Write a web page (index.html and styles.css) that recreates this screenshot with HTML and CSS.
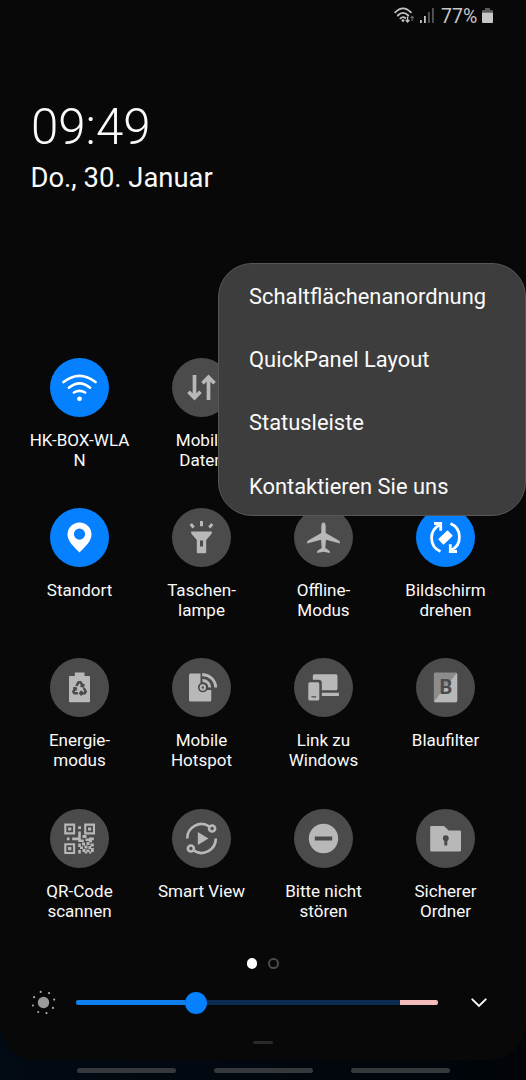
FILE: index.html
```html
<!DOCTYPE html>
<html lang="de">
<head>
<meta charset="utf-8">
<title>Quick Panel</title>
<link rel="stylesheet" href="styles.css">
</head>
<body>
<div class="screen">
  <main class="panel">
    <header class="status">
      <svg class="status-wifi" viewBox="0 0 21 17" width="21" height="17">
        <g fill="none" stroke="#c4c4c4" stroke-width="1.8" stroke-linecap="round">
          <path d="M1.200 5.400Q9-2.600 16.900 5.400"/><path d="M3.800 8.500Q9 3.200 14.300 8.500"/><path d="M6.400 11.400Q9 8.900 11.400 11.200"/>
        </g>
        <circle cx="9" cy="13.600" r="1.400" fill="#c4c4c4"/>
        <path d="M13.600 9.500v5.200M11.800 13l1.800 2 1.800-2" fill="none" stroke="#c4c4c4" stroke-width="1.300"/>
        <path d="M18.200 14v-4.500M16.600 11l1.600-1.700 1.600 1.700" fill="none" stroke="#666" stroke-width="1.200"/>
      </svg>
      <svg class="status-signal" viewBox="0 0 14 15" width="14" height="15">
        <path d="M0 12h1.800v3H0z" fill="#c4c4c4"/><path d="M4 8h1.800v7H4z" fill="#c4c4c4"/>
        <path d="M8 4h1.800v11H8zM12 0h1.800v15H12z" fill="#555"/>
      </svg>
      <span class="status-percent">77%</span>
      <svg class="status-battery" viewBox="0 0 11 15" width="11" height="15">
        <path d="M3 0h5v2h2a1 1 0 0 1 1 1v1.500H0V3a1 1 0 0 1 1-1h2z" fill="#5a5a5a"/>
        <path d="M0 4.500h11V14a1 1 0 0 1-1 1H1a1 1 0 0 1-1-1z" fill="#c6c6c6"/>
      </svg>
    </header>

    <div class="clock">09:49</div>
    <div class="date">Do., 30. Januar</div>

    <section class="tiles">
      <div class="tile on">
        <svg class="tile-icon" viewBox="-29.500 -29.500 59 59">
          <g class="line round" stroke-width="2.600"><path d="M-16-5.400Q0-18 16-5.400"/><path d="M-10.600 .2Q0-8.600 10.600 .2"/><path d="M-5.600 5Q0 1.700 5.600 5"/></g>
          <circle cx="0" cy="11.300" r="2.400"/>
        </svg>
        <span class="label">HK-BOX-WLA<br>N</span>
      </div>
      <div class="tile">
        <svg class="tile-icon" viewBox="-29.500 -29.500 59 59">
          <g class="line" stroke-width="3.700"><path d="M-7-12.500V10.500M-13 4.300L-7 10.400-1 4.300"/><path d="M7 12.500V-10.500M1-4.300L7-10.400 13-4.300"/></g>
        </svg>
        <span class="label">Mobile<br>Daten</span>
      </div>
      <div class="tile"></div>
      <div class="tile"></div>

      <div class="tile on">
        <svg class="tile-icon" viewBox="-29.500 -29.500 59 59">
          <path fill-rule="evenodd" d="M0-15A12 12 0 0 1 12-3C12 4 5 9.800 0 15-5 9.800-12 4-12-3A12 12 0 0 1 0-15ZM0-9A5.600 5.600 0 1 0 0 2.200 5.600 5.600 0 1 0 0-9Z"/>
        </svg>
        <span class="label">Standort</span>
      </div>
      <div class="tile">
        <svg class="tile-icon" viewBox="-29.500 -29.500 59 59">
          <path fill-rule="evenodd" d="M-10.300-6H10.300V-4L4.700 2.500V14.500Q4.700 15.800 3.400 15.800H-3.400Q-4.700 15.800-4.700 14.500V2.500L-10.300-4ZM-1.500 3V9H1.500V3Z"/>
          <path class="line" stroke-width="3" d="M0-16.500V-11.300M-10.800-13.500L-7.800-10M10.800-13.500L7.800-10"/>
        </svg>
        <span class="label">Taschen-<br>lampe</span>
      </div>
      <div class="tile">
        <svg class="tile-icon" viewBox="-29.500 -29.500 59 59">
          <path d="M0-15C1.600-15 2.200-13 2.200-11V-4.600L15.300 3Q16.700 4 16.600 6L2.500 2.300 1.800 10.500 6 13.200Q6.500 14 6.300 15.500L0 14.300-6.300 15.500Q-6.500 14-6 13.200L-1.800 10.500-2.500 2.300-16.600 6Q-16.700 4-15.300 3L-2.200-4.600V-11C-2.200-13-1.600-15 0-15Z"/>
        </svg>
        <span class="label">Offline-<br>Modus</span>
      </div>
      <div class="tile on">
        <svg class="tile-icon" viewBox="-29.500 -29.500 59 59">
          <g class="line" stroke-width="2.800">
            <path d="M-5 14A14.700 14.700 0 0 1-5.500-12.800M-11.500-14H-4.800V-6.800"/>
            <path d="M5-14A14.700 14.700 0 0 1 5.500 12.800M11.500 14H4.800V6.800"/>
          </g>
          <rect x="-3.900" y="-6.600" width="7.800" height="13.200" rx=".8" transform="rotate(46)"/>
        </svg>
        <span class="label">Bildschirm<br>drehen</span>
      </div>

      <div class="tile">
        <svg class="tile-icon" viewBox="-29.500 -29.500 59 59">
          <path d="M-4.700-15H5V-11.500H9.500Q10.500-11.500 10.500-10.500V13.700Q10.500 14.700 9.500 14.700H-9.500Q-10.500 14.700-10.500 13.700V-10.500Q-10.500-11.500-9.500-11.500H-4.700Z"/>
          <g class="cut-line" stroke-width="2.500">
            <path d="M-3.100-1.600L-1-5.200H1L3.200-1.800M4.200-3.600L3.500-1.200 1-1.800"/>
            <path d="M4.300.5L6.200 4 5.200 5.700H1.200M2.500 3.500L.8 5.700 2.500 7.800"/>
            <path d="M-1.600 5.700H-5.200L-6.200 4-4.200.8M-6.300 1.200L-4.100.5-3.300 3"/>
          </g>
        </svg>
        <span class="label">Energie-<br>modus</span>
      </div>
      <div class="tile">
        <svg class="tile-icon" viewBox="-29.500 -29.500 59 59">
          <path d="M-11-14H-1V-4.200A4.700 4.700 0 0 0 3.500 4Q5 3 5.500 2.500H9.800V12.500Q9.800 14 8.300 14H-11Q-12.500 14-12.500 12.500V-12.500Q-12.500-14-11-14Z"/>
          <circle class="cut" cx="1.300" cy="0" r="4.800"/>
          <circle class="line" cx="1.300" cy="0" r="2.200" stroke-width="2"/>
          <path class="line" stroke-width="2.900" d="M1-7A7 7 0 0 1 8.300 0M.6-12.700A12.900 12.900 0 0 1 14.200 0"/>
        </svg>
        <span class="label">Mobile<br>Hotspot</span>
      </div>
      <div class="tile">
        <svg class="tile-icon" viewBox="-29.500 -29.500 59 59">
          <path d="M-10.700-7.700V-11.800Q-10.700-13.300-9.200-13.300H12.500Q14-13.300 14-11.800V1.200Q14 2.700 12.500 2.700H-1.700V-4.500Q-1.700-7.700-5-7.700Z"/>
          <path d="M-1.700 5.300H15.400V8.400H-1.700Z"/>
          <path fill-rule="evenodd" d="M-13.700-5.300H-5.700Q-4.200-5.300-4.200-3.800V11.500Q-4.200 13-5.700 13H-13.700Q-15.200 13-15.200 11.500V-3.800Q-15.200-5.300-13.700-5.300ZM-12 8.700V10.100H-7.400V8.700Z"/>
        </svg>
        <span class="label">Link zu<br>Windows</span>
      </div>
      <div class="tile">
        <svg class="tile-icon" viewBox="-29.500 -29.500 59 59">
          <rect x="-11.700" y="-15" width="23.400" height="29.700" rx="1.500" fill="#8c8c8c"/>
          <path d="M11.300-14.600L11.700-13.500V13.200Q11.700 14.700 10.200 14.700H-10.200Q-11 14.700-11.500 14Z"/>
          <text class="filter-letter" x="0.300" y="6.400">B</text>
        </svg>
        <span class="label">Blaufilter</span>
      </div>

      <div class="tile">
        <svg class="tile-icon" viewBox="-29.500 -29.500 59 59">
          <g class="line" stroke-width="2.100"><path d="M-14.200-13.900h8.800v8.800h-8.800zM5.700-13.900h8.800v8.800H5.700zM-14.200 5.700h8.800v8.800h-8.800z"/></g>
          <path d="M-11.400-11.100h3.200v3.200h-3.200zM8.500-11.100h3.200v3.200H8.500zM-11.400 8.500h3.200v3.200h-3.200z"/>
          <path d="M-1.300-12.300h2.800v2.800h-2.800zM-1.300-7h2.600v4h-2.600zM-12.600-1h2.600v2.800h-2.600zM-7.300-1h6v2.800h-6zM-1.300-3h2.600v6.400h-2.600zM3-3.500h4v3H3zM9.500-1h4.800v2.800h-1.800v2h-3zM1.300 1h3v2.400h-3zM6 0h3.500v2.500H6zM-1.300 5h2.600v3.500h-2.600zM2.500 4h3v3h-3zM7 3.500h3v3H7zM11 5h3.300v3H11zM.5 8h3v2.500h-3zM5 7h3v3H5zM9 7.500h2.500v3H9zM-1.300 11.500h2.600v3.600h-2.600zM3 10.500h3v3H3zM7 11h3v2.500H7zM11.500 9.500h2.800v4h-2.800zM5.200 13h2.500v2H5.200zM9.500 13h2.300v2H9.500z"/>
        </svg>
        <span class="label">QR-Code<br>scannen</span>
      </div>
      <div class="tile">
        <svg class="tile-icon" viewBox="-29.500 -29.500 59 59">
          <g class="line" stroke-width="2.700">
            <path d="M-14.300 0A14.400 14.400 0 0 1 7.700-12.200M14.300 0A14.400 14.400 0 0 1-7.700 12.200"/>
            <circle cx="10.600" cy="-10" r="3"/><circle cx="-10.600" cy="10" r="3"/>
          </g>
          <path d="M-3.700-6.500L7 0-3.700 6.500Z"/>
        </svg>
        <span class="label">Smart View</span>
      </div>
      <div class="tile">
        <svg class="tile-icon" viewBox="-29.500 -29.500 59 59">
          <circle r="14.700"/><path class="cut" d="M-8.700-2H8.700V2H-8.700Z"/>
        </svg>
        <span class="label">Bitte nicht<br>stören</span>
      </div>
      <div class="tile">
        <svg class="tile-icon" viewBox="-29.500 -29.500 59 59">
          <path d="M-14-12.500H-1.500L3.200-8H14.200Q15.500-8 15.500-6.700V11.700Q15.500 13 14.200 13H-14Q-15.300 13-15.300 11.700V-11.200Q-15.300-12.500-14-12.500Z"/>
          <circle class="cut" cx=".3" cy="-.3" r="2.900"/><path class="cut" d="M-1.200 0H1.800V7H-1.200Z"/>
        </svg>
        <span class="label">Sicherer<br>Ordner</span>
      </div>
    </section>

    <div class="pages"><i class="page current"></i><i class="page"></i></div>

    <div class="brightness">
      <svg class="sun" viewBox="-12.500 -12.500 25 25">
        <circle r="5.700" fill="#999"/>
        <g fill="#a8a8a8"><circle cx="-2.800" cy="-10.600" r="1.100"/><circle cx="5.500" cy="-9.400" r="1.100"/><circle cx="10.700" cy="-2.900" r="1.100"/><circle cx="9.500" cy="5.400" r="1.100"/><circle cx="3" cy="10.600" r="1.100"/><circle cx="-5.300" cy="9.500" r="1.100"/><circle cx="-10.600" cy="3" r="1.100"/><circle cx="-9.400" cy="-5.300" r="1.100"/></g>
      </svg>
      <div class="track"><div class="fill"></div><div class="knob"></div><div class="rest"></div><div class="hot"></div></div>
      <svg class="chevron" viewBox="0 0 16 10"><path d="M1.300 1.300L8 8 14.700 1.300" fill="none" stroke="#fff" stroke-width="1.900" stroke-linecap="round"/></svg>
    </div>
    <div class="handle"></div>
  </main>
  <nav class="nav"><i></i><i></i><i></i></nav>

  <div class="menu">
    <div class="menu-item">Schaltflächenanordnung</div>
    <div class="menu-item">QuickPanel Layout</div>
    <div class="menu-item">Statusleiste</div>
    <div class="menu-item">Kontaktieren Sie uns</div>
  </div>
</div>
</body>
</html>
```
FILE: styles.css
```css
* { box-sizing: border-box; }
body { margin: 0; background: #01070d; font-family: Roboto, sans-serif; color: #fafafa; }
.screen { position: relative; width: 526px; height: 1080px; overflow: hidden; background: linear-gradient(90deg, #020a13, #01050a); }
.panel { display: flex; flex-direction: column; height: 1060px; background: #080808; border-radius: 0 0 36px 36px; }
svg { display: block; flex: none; }

.status { display: flex; align-items: center; height: 31px; padding-left: 394px; color: #c6c6c6; }
.status-wifi { margin-top: -1px; }
.status-signal { margin-left: 5px; }
.status-percent { width: 37px; margin-left: 7px; padding-top: 2px; font-size: 19.5px; line-height: 31px; white-space: nowrap; }
.status-battery { margin-left: 4px; }

.clock { height: 59px; margin: 67px 0 0 31px; font-size: 49.2px; font-weight: 300; line-height: 59px; }
.date { height: 32px; margin: 5px 0 0 30.5px; font-size: 27.4px; line-height: 32px; }

.tiles { display: grid; grid-template-columns: repeat(4, 122px); grid-auto-rows: 150.4px; margin: 163.500px 0 0 18.500px; }
.tile { display: flex; flex-direction: column; align-items: center; gap: 13px; }
.tile-icon { width: 59px; height: 59px; border-radius: 50%; background: #4b4b4b; fill: #b8b8b8; stroke: none; color: #b8b8b8; }
.on .tile-icon { background: #0581ff; fill: #fff; color: #fff; }
.line { fill: none; stroke: currentColor; }
.round { stroke-linecap: round; }
.cut { fill: #4b4b4b; }
.cut-line { fill: none; stroke: #4b4b4b; }
.filter-letter { fill: #4b4b4b; font-size: 20px; font-weight: 700; text-anchor: middle; }
.label { font-size: 17.050px; line-height: 20px; text-align: center; white-space: nowrap; }

.pages { display: flex; justify-content: center; gap: 11px; margin: -1px 1px 0 0; }
.page { width: 10.5px; height: 10.5px; border: 2px solid #4a4a4a; border-radius: 50%; }
.current { border-color: #fff; background: #fff; }

.brightness { display: flex; align-items: center; height: 25px; margin: 21.500px 0 0 31px; }
.sun { width: 25px; height: 25px; }
.track { display: flex; align-items: center; width: 362px; height: 22px; margin-left: 19.5px; }
.fill { width: 109.500px; height: 4.600px; border-radius: 2px 0 0 2px; background: #0f7eee; }
.knob { width: 22px; height: 22px; border-radius: 50%; background: #0581ff; }
.rest { width: 193px; height: 4.600px; background: #0b2c50; }
.hot { width: 37.500px; height: 4.600px; border-radius: 0 2px 2px 0; background: #f3bcbc; }
.chevron { width: 16px; height: 10px; margin-left: 33.500px; }
.handle { width: 20px; height: 3px; margin: 25.500px auto 0; border-radius: 2px; background: #2a2a2a; }

.nav { display: flex; justify-content: center; gap: 38px; padding-top: 8px; }
.nav i { width: 99px; height: 5px; border-radius: 3px; background: #36393c; }

.menu { position: absolute; left: 218px; top: 263px; width: 308px; height: 253px; border: 1px solid #575757; border-radius: 34px; background: #3d3d3d; }
.menu-item { height: 63.200px; padding-left: 30px; font-size: 21.9px; line-height: 65px; }
```
